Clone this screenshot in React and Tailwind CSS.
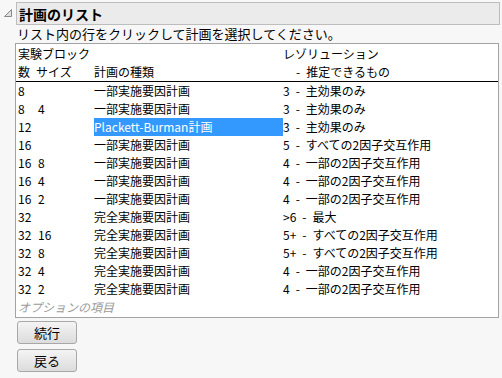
import React from "react";

const S = "\u2002-\u2002";
const rows = [
  ["8", "", "一部実施要因計画", "3" + S + "主効果のみ"],
  ["8", "4", "一部実施要因計画", "3" + S + "主効果のみ"],
  ["12", "", "Plackett-Burman計画", "3" + S + "主効果のみ"],
  ["16", "", "一部実施要因計画", "5" + S + "すべての2因子交互作用"],
  ["16", "8", "一部実施要因計画", "4" + S + "一部の2因子交互作用"],
  ["16", "4", "一部実施要因計画", "4" + S + "一部の2因子交互作用"],
  ["16", "2", "一部実施要因計画", "4" + S + "一部の2因子交互作用"],
  ["32", "", "完全実施要因計画", ">6" + S + "最大"],
  ["32", "16", "完全実施要因計画", "5+" + S + "すべての2因子交互作用"],
  ["32", "8", "完全実施要因計画", "5+" + S + "すべての2因子交互作用"],
  ["32", "4", "完全実施要因計画", "4" + S + "一部の2因子交互作用"],
  ["32", "2", "完全実施要因計画", "4" + S + "一部の2因子交互作用"],
];

export default function App() {
  return (
    <div
      className="w-[502px] h-[378px] bg-[#f7f7f7] text-black text-[12px] leading-[18px] overflow-hidden"
      style={{ fontFamily: '"Noto Sans CJK JP", "Noto Sans", sans-serif' }}
    >
      <div className="flex items-start pt-[2px]">
        <div className="w-[16px] h-[22px] flex items-center justify-center">
          <svg width="10" height="10" viewBox="0 0 10 10">
            <path d="M8.5 1.5 L8.5 8.5 L1.5 8.5 Z" fill="#e0e0e0" stroke="#8a8a8a" strokeWidth="1" />
          </svg>
        </div>
        <div className="w-[484px] h-[23px] bg-[#ebebeb] border border-[#bdbdbd] flex items-center pl-[2px]">
          <span className="text-[14px] font-bold leading-[20px]">計画のリスト</span>
        </div>
      </div>
      <div className="pl-[17px] h-[18px] leading-[18px] text-[13px]">
        リスト内の行をクリックして計画を選択してください。
      </div>
      <div className="ml-[15px] w-[484px] h-[275px] bg-white border border-[#a3a3a3]">
        <div className="flex h-[18px] mt-[1px]">
          <div className="w-[267px] pl-[2px] whitespace-nowrap">実験ブロック</div>
          <div className="whitespace-nowrap">レゾリューション</div>
        </div>
        <div className="flex h-[18px] border-b border-black box-content">
          <div className="w-[20px] pl-[2px]">数</div>
          <div className="w-[58px] whitespace-nowrap">サイズ</div>
          <div className="w-[189px]">計画の種類</div>
          <div className="pl-[13px] whitespace-nowrap">{"-\u2002推定できるもの"}</div>
        </div>
        {rows.map((r, i) => (
          <div key={i} className="flex h-[18px] items-center whitespace-nowrap">
            <div className="w-[22px] pl-[2px]">{r[0]}</div>
            <div className="w-[56px]">{r[1]}</div>
            {i === 2 ? (
              <div className="w-[189px] h-[18px] bg-[#3399ff] text-white">{r[2]}</div>
            ) : (
              <div className="w-[189px]">{r[2]}</div>
            )}
            <div>{r[3]}</div>
          </div>
        ))}
        <div className="h-[18px] pl-[2px] italic text-[#9a9a9a]">オプションの項目</div>
      </div>
      <div className="flex flex-col gap-[5px] pl-[17px] pt-[3px]">
        <button className="w-[60px] h-[23px] rounded-[3px] border border-[#a8a8a8] bg-gradient-to-b from-[#f4f4f4] to-[#dcdcdc] text-[13px] leading-[20px]">
          続行
        </button>
        <button className="w-[60px] h-[23px] rounded-[3px] border border-[#a8a8a8] bg-gradient-to-b from-[#f4f4f4] to-[#dcdcdc] text-[13px] leading-[20px]">
          戻る
        </button>
      </div>
    </div>
  );
}
